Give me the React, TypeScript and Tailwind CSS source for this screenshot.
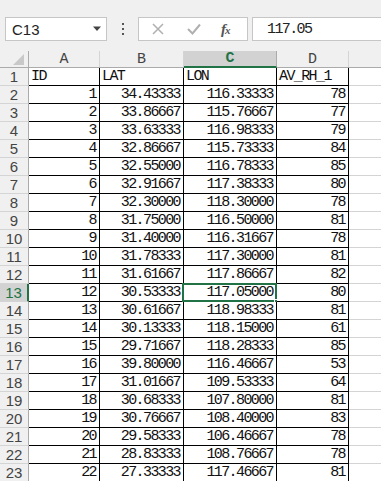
const rows: [string, string, string, string][] = [
  ['1', '34.43333', '116.33333', '78'],
  ['2', '33.86667', '115.76667', '77'],
  ['3', '33.63333', '116.98333', '79'],
  ['4', '32.86667', '115.73333', '84'],
  ['5', '32.55000', '116.78333', '85'],
  ['6', '32.91667', '117.38333', '80'],
  ['7', '32.30000', '118.30000', '78'],
  ['8', '31.75000', '116.50000', '81'],
  ['9', '31.40000', '116.31667', '78'],
  ['10', '31.78333', '117.30000', '81'],
  ['11', '31.61667', '117.86667', '82'],
  ['12', '30.53333', '117.05000', '80'],
  ['13', '30.61667', '118.98333', '81'],
  ['14', '30.13333', '118.15000', '61'],
  ['15', '29.71667', '118.28333', '85'],
  ['16', '39.80000', '116.46667', '53'],
  ['17', '31.01667', '109.53333', '64'],
  ['18', '30.68333', '107.80000', '81'],
  ['19', '30.76667', '108.40000', '83'],
  ['20', '29.58333', '106.46667', '78'],
  ['21', '28.83333', '108.76667', '78'],
  ['22', '27.33333', '117.46667', '81'],
];

const mono = "font-['Liberation_Mono',monospace] text-[15px] tracking-[-1.6px]";
const cols = 'grid grid-cols-[29px_71px_84px_93px_72px_1fr]';

function Cell({ text, right, selected }: { text: string; right?: boolean; selected?: boolean }) {
  return (
    <div
      className={`relative h-[18px] border-r border-b border-black bg-white pl-[2px] pr-[3px] flex items-end leading-[17px] text-[#111] ${mono} ${
        right ? 'justify-end' : 'justify-start'
      }`}
    >
      <span>{text}</span>
      {selected && (
        <>
          <div className="absolute -left-[2px] -top-[1px] -right-[1px] -bottom-[1px] border-2 border-[#217346]" />
          <div className="absolute -right-[4px] -bottom-[4px] w-[6px] h-[6px] bg-[#217346] border border-white" />
        </>
      )}
    </div>
  );
}

function RowHead({ n, active }: { n: number; active?: boolean }) {
  return (
    <div
      className={`h-[18px] flex items-center justify-center leading-none border-b border-[#d4d4d4] font-['Liberation_Sans',sans-serif] text-[15px] ${
        active
          ? 'bg-[#d2d2d2] text-[#217346] border-r-2 border-r-[#217346]'
          : 'bg-[#f0f0f0] text-[#444] border-r border-r-[#ababab]'
      }`}
    >
      {n}
    </div>
  );
}

export default function App() {
  return (
    <div className="w-[381px] h-[481px] overflow-hidden bg-[#f0f0f0] select-none">
      {/* formula bar */}
      <div className="h-[51px] flex items-start pt-[17px] pl-[5px]">
        <div className="w-[102px] h-[24px] bg-white border border-[#c6c6c6] flex items-center justify-between pl-[6px] pr-[3px]">
          <span className="font-['Liberation_Sans',sans-serif] text-[15px] leading-none text-[#222]">C13</span>
          <svg width="10" height="6" viewBox="0 0 10 6" className="mr-[1px]">
            <path d="M1 0.5h8L5 5z" fill="#444" />
          </svg>
        </div>
        <div className="w-[31px] h-[24px] flex flex-col items-center justify-center gap-[3px]">
          <span className="w-[2px] h-[2px] bg-[#555]" />
          <span className="w-[2px] h-[2px] bg-[#555]" />
          <span className="w-[2px] h-[2px] bg-[#555]" />
        </div>
        <div className="w-[110px] h-[24px] bg-white border border-[#c6c6c6] flex items-center">
          <svg width="12" height="12" viewBox="0 0 12 12" className="ml-[13px]">
            <path d="M1 1l10 10M11 1L1 11" stroke="#b0b0b0" strokeWidth="1.5" />
          </svg>
          <svg width="14" height="12" viewBox="0 0 14 12" className="ml-[23px]">
            <path d="M1 6l4.5 4.5L13 1.5" stroke="#b0b0b0" strokeWidth="2" fill="none" />
          </svg>
          <span className="ml-[20px] font-['Liberation_Serif',serif] italic font-bold text-[15px] leading-none text-[#555] tracking-[-1px]">
            f<span className="text-[11px]">x</span>
          </span>
        </div>
        <div className="ml-[4px] flex-1 h-[24px] bg-white border border-[#c6c6c6] border-r-0 flex items-center pl-[14px]">
          <span className={`${mono} leading-none text-[#222]`}>117.05</span>
        </div>
      </div>

      {/* column headers */}
      <div className={`${cols} h-[17px] bg-[#f0f0f0] border-b border-[#ababab]`}>
        <div className="relative border-r border-[#ababab]">
          <svg width="11" height="11" viewBox="0 0 11 11" className="absolute right-[4px] bottom-[2px]">
            <path d="M11 0V11H0z" fill="#c8c8c8" />
          </svg>
        </div>
        {['A', 'B', 'C', 'D'].map((c) => (
          <div
            key={c}
            className={`flex items-center justify-center leading-none font-['Liberation_Mono',monospace] text-[15px] ${
              c === 'C'
                ? 'bg-[#d2d2d2] text-[#217346] font-bold border-b-2 border-[#217346] -mb-[1px] border-r border-r-[#ababab]'
                : 'text-[#444] border-r border-[#d4d4d4]'
            }`}
          >
            {c}
          </div>
        ))}
        <div />
      </div>

      {/* grid */}
      <div className={cols}>
        <RowHead n={1} />
        <Cell text="ID" />
        <Cell text="LAT" />
        <Cell text="LON" />
        <Cell text="AV_RH_1" />
        <div className="h-[18px] border-b border-[#d4d4d4] bg-white" />
        {rows.map((r, i) => (
          <div key={i} className="contents">
            <RowHead n={i + 2} active={i + 2 === 13} />
            <Cell text={r[0]} right />
            <Cell text={r[1]} right />
            <Cell text={r[2]} right selected={i + 2 === 13} />
            <Cell text={r[3]} right />
            <div className="h-[18px] border-b border-[#d4d4d4] bg-white" />
          </div>
        ))}
      </div>
    </div>
  );
}
